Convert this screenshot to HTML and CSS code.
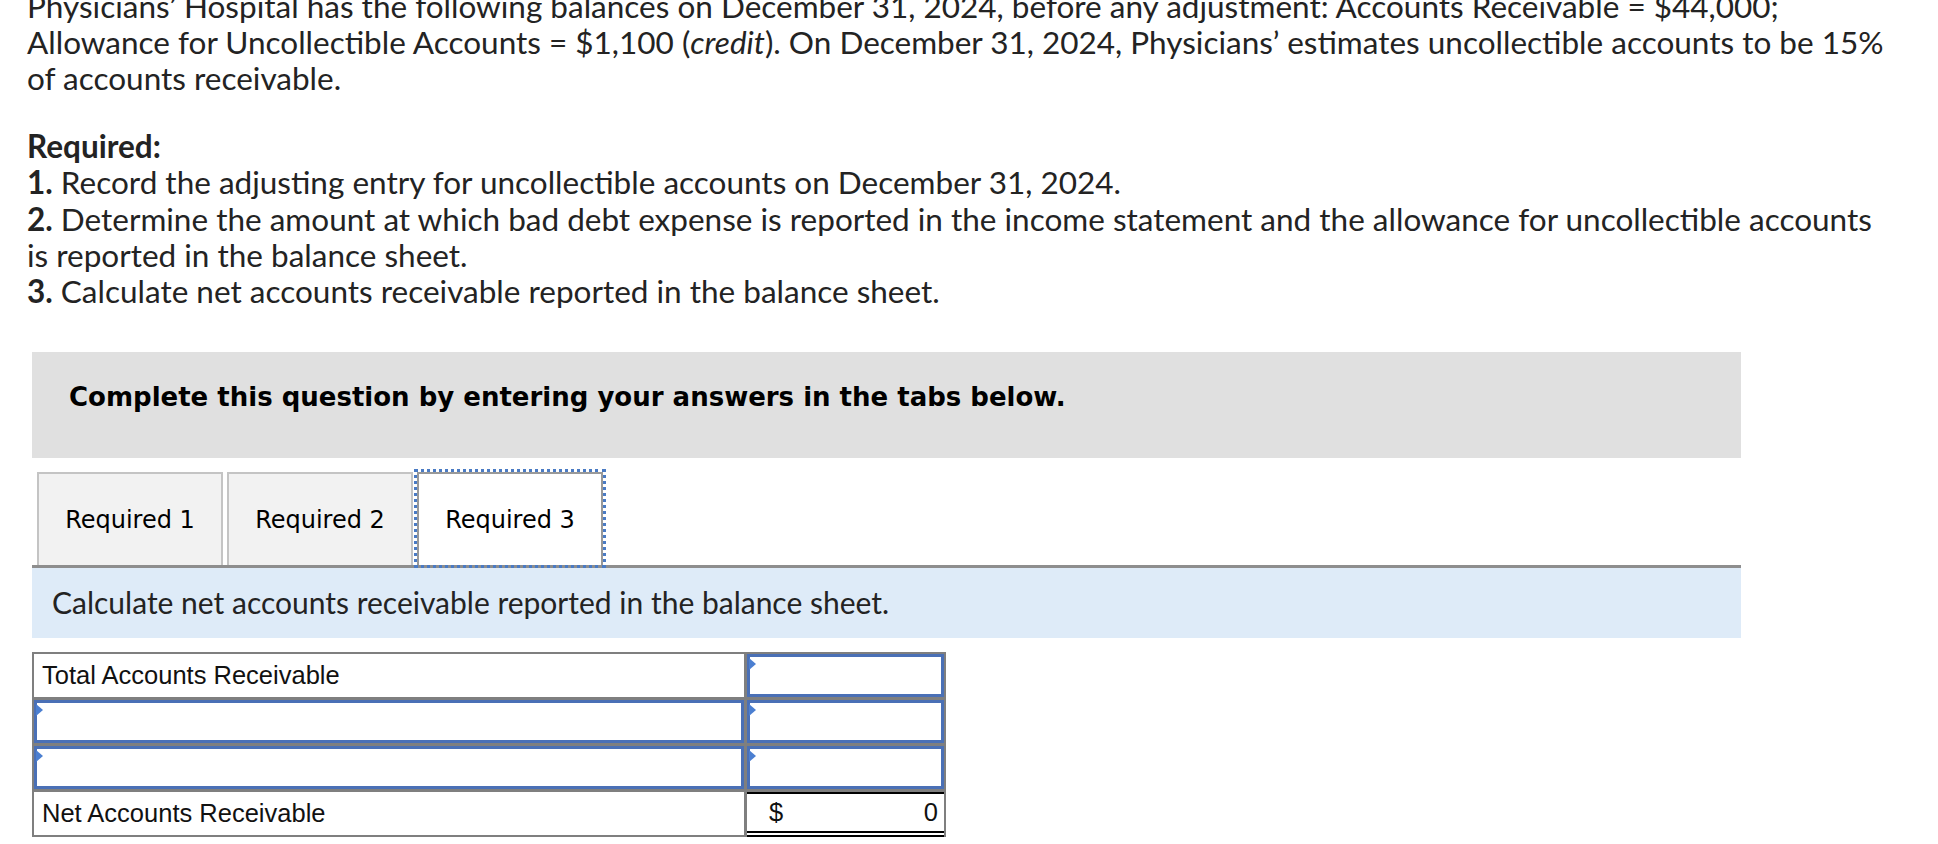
FILE: index.html
```html
<!DOCTYPE html>
<html lang="en">
<head>
<meta charset="utf-8">
<title>Physicians' Hospital</title>
<link rel="stylesheet" href="styles.css">
</head>
<body>
<div class="page">
  <div class="intro">
    <p class="problem">Physicians’ Hospital has the following balances on December 31, 2024, before any adjustment: Accounts Receivable = $44,000;<br>Allowance for Uncollectible Accounts = $1,100 (<em>credit</em>). On December 31, 2024, Physicians’ estimates uncollectible accounts to be 15%<br>of accounts receivable.</p>
    <div class="required">
      <div><strong>Required:</strong></div>
      <div><strong>1.</strong> Record the adjusting entry for uncollectible accounts on December 31, 2024.</div>
      <div><strong>2.</strong> Determine the amount at which bad debt expense is reported in the income statement and the allowance for uncollectible accounts<br>is reported in the balance sheet.</div>
      <div><strong>3.</strong> Calculate net accounts receivable reported in the balance sheet.</div>
    </div>
  </div>

  <div class="question">
    <div class="instructions">Complete this question by entering your answers in the tabs below.</div>
    <div class="tabs">
      <div class="tab">Required 1</div>
      <div class="tab">Required 2</div>
      <div class="tab active">Required 3</div>
    </div>
    <div class="prompt">Calculate net accounts receivable reported in the balance sheet.</div>

    <div class="sheet">
      <div class="cell label">Total Accounts Receivable</div>
      <div class="cell"><div class="field"></div></div>
      <div class="cell"><div class="field"></div></div>
      <div class="cell"><div class="field"></div></div>
      <div class="cell"><div class="field"></div></div>
      <div class="cell"><div class="field"></div></div>
      <div class="cell label">Net Accounts Receivable</div>
      <div class="cell total"><span>$</span><span>0</span></div>
    </div>
  </div>
</div>
</body>
</html>
```

FILE: styles.css
```css
html, body {
  margin: 0;
  background: #ffffff;
}

.page {
  overflow: hidden;
}

.intro {
  margin-top: -12px;
  padding-left: 27px;
  width: 1905px;
  font-family: Lato, "Liberation Sans", sans-serif;
  font-size: 31.5px;
  line-height: 36px;
  color: #232323;
}

.problem {
  margin: 0 0 32px;
}

.required {
  line-height: 36.3px;
}

.intro strong {
  font-weight: 700;
}

.question {
  margin: 43px 0 0 32px;
  width: 1709px;
}

.instructions {
  box-sizing: border-box;
  height: 106px;
  padding: 30px 37px 0;
  background: #e0e0e0;
  font-family: "DejaVu Sans", sans-serif;
  font-weight: 700;
  font-size: 26px;
  line-height: 30px;
  color: #000;
}

.tabs {
  display: flex;
  gap: 4px;
  margin-top: 14px;
  padding-left: 5px;
  border-bottom: 3px solid #8e8e8e;
}

.tab {
  box-sizing: border-box;
  width: 186px;
  height: 93px;
  display: flex;
  align-items: center;
  justify-content: center;
  background: #f2f2f2;
  border: 2px solid #c4c4c4;
  border-bottom: none;
  font-family: "DejaVu Sans", sans-serif;
  font-size: 24px;
  color: #000;
}

.tab.active {
  background: #ffffff;
  border-color: #999999;
  outline: 3px dotted #4a7bc4;
  outline-offset: 0;
}

.prompt {
  height: 70px;
  padding-left: 20px;
  background: #deebf8;
  font-family: Lato, "Liberation Sans", sans-serif;
  font-size: 30px;
  line-height: 68px;
  color: #232323;
}

.sheet {
  box-sizing: border-box;
  width: 914px;
  margin-top: 14px;
  display: grid;
  grid-template-columns: 1fr 197px;
  grid-auto-rows: 43px;
  gap: 3px;
  background: #7f7f7f;
  border: 2px solid #7f7f7f;
  font-family: "Liberation Sans", Arial, sans-serif;
  font-size: 25.5px;
  color: #111;
}

.cell {
  background: #ffffff;
  display: flex;
  align-items: center;
}

.label {
  padding-left: 8px;
}

.field {
  position: relative;
  box-sizing: border-box;
  width: 100%;
  height: 100%;
  border: 3px solid #4a70b6;
}

.field::before {
  content: "";
  position: absolute;
  left: -1px;
  top: 1px;
  border-left: 7px solid #4b7fd1;
  border-top: 6px solid transparent;
  border-bottom: 6px solid transparent;
}

.total {
  justify-content: space-between;
  box-sizing: border-box;
  padding: 0 6px 0 22px;
  border-top: 2px solid #000;
  border-bottom: 6px double #000;
  margin-bottom: -2px;
}
```
